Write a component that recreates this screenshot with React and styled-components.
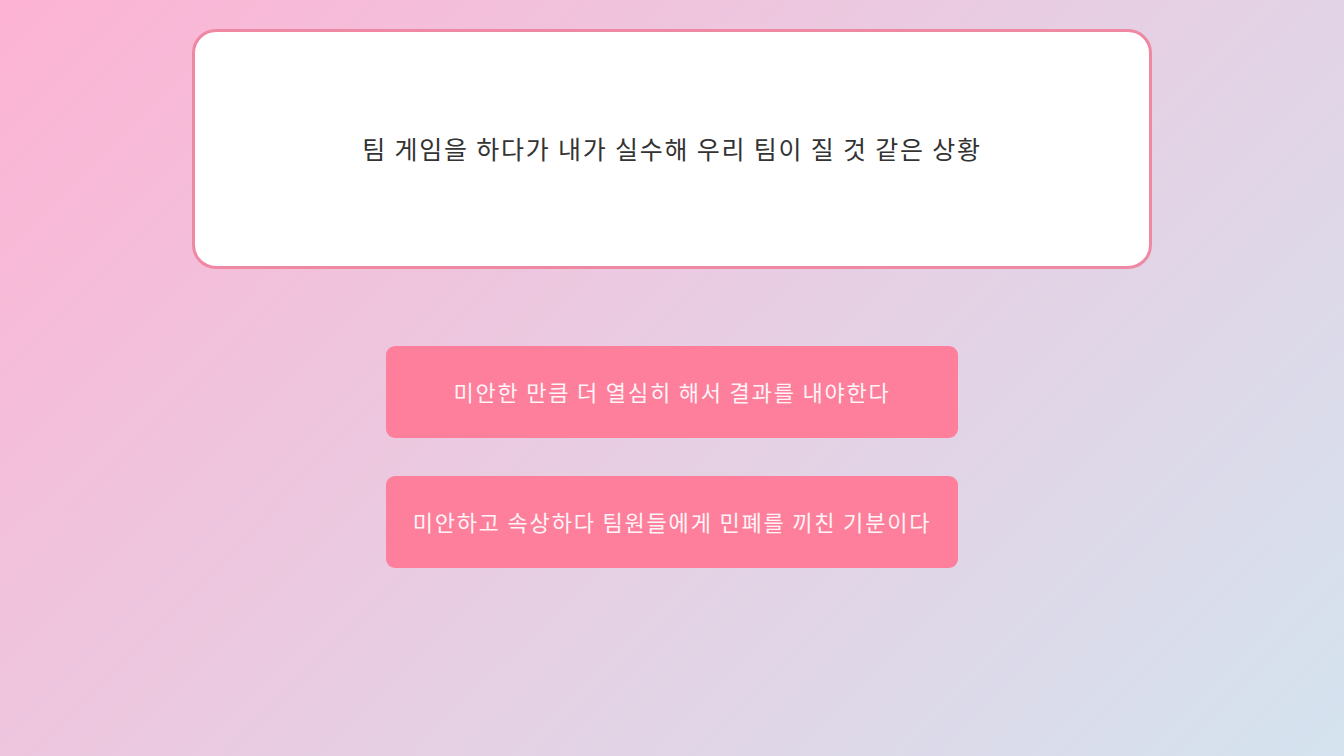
import React from "react";
import styled, { createGlobalStyle } from "styled-components";

const GlobalStyle = createGlobalStyle`
  html, body { margin: 0; padding: 0; }
  body {
    min-height: 100vh;
    font-family: "Noto Sans CJK KR", "Noto Sans", sans-serif;
    background: linear-gradient(135deg, #fdb3d4 0%, #e8cde2 50%, #d4e3ef 100%);
    background-attachment: fixed;
  }
`;

const Page = styled.main`
  min-height: 100vh;
  box-sizing: border-box;
  display: flex;
  flex-direction: column;
  align-items: center;
  padding-top: 29px;
`;

const QuestionCard = styled.section`
  box-sizing: border-box;
  width: 960px;
  height: 240px;
  background: #ffffff;
  border: 3px solid #ef88a3;
  border-radius: 24px;
  display: flex;
  align-items: center;
  justify-content: center;
`;

const QuestionText = styled.p`
  margin: 0 0 2px;
  font-size: 25px;
  color: #333333;
  letter-spacing: 0.072em;
`;

const Choices = styled.div`
  margin-top: 77px;
  display: flex;
  flex-direction: column;
  gap: 38px;
`;

const ChoiceButton = styled.button`
  width: 572px;
  height: 92px;
  padding: 0 0 3px;
  border: none;
  border-radius: 9px;
  background: #fd7f9b;
  color: #fff4f7;
  font-family: "Noto Sans CJK KR", "Noto Sans", sans-serif;
  font-size: 22px;
  letter-spacing: 0.082em;
  cursor: pointer;
`;

const choices = [
  "미안한 만큼 더 열심히 해서 결과를 내야한다",
  "미안하고 속상하다 팀원들에게 민폐를 끼친 기분이다",
];

export default function App() {
  return (
    <>
      <GlobalStyle />
      <Page>
        <QuestionCard>
          <QuestionText>팀 게임을 하다가 내가 실수해 우리 팀이 질 것 같은 상황</QuestionText>
        </QuestionCard>
        <Choices>
          {choices.map((c) => (
            <ChoiceButton key={c}>{c}</ChoiceButton>
          ))}
        </Choices>
      </Page>
    </>
  );
}
